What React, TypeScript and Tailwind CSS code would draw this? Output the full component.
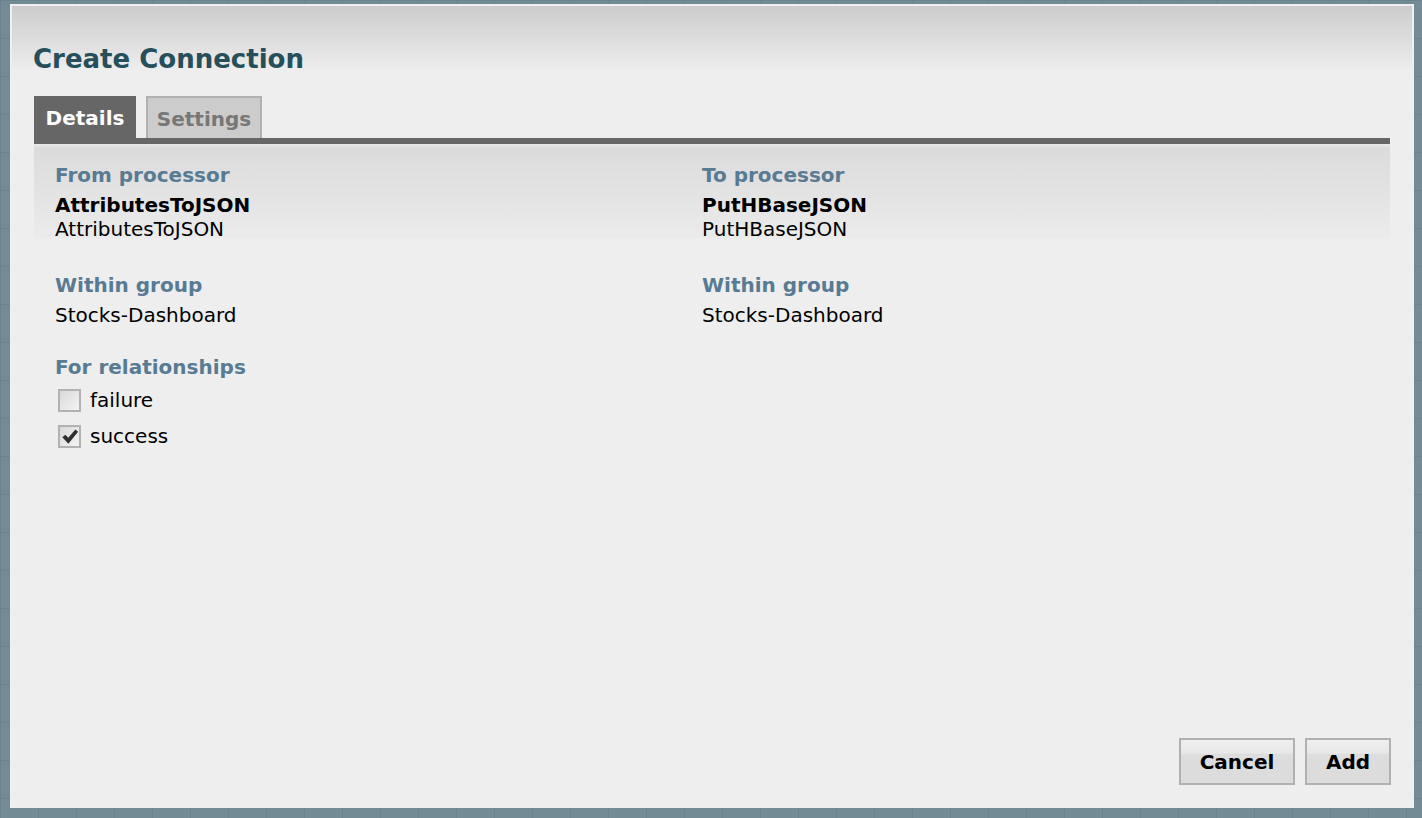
type Side = {
  label: string;
  name: string;
  type: string;
  group: string;
};

const FROM: Side = {
  label: "From processor",
  name: "AttributesToJSON",
  type: "AttributesToJSON",
  group: "Stocks-Dashboard",
};

const TO: Side = {
  label: "To processor",
  name: "PutHBaseJSON",
  type: "PutHBaseJSON",
  group: "Stocks-Dashboard",
};

const RELATIONSHIPS = [
  { name: "failure", checked: false },
  { name: "success", checked: true },
];

function Label({ children }: { children: React.ReactNode }) {
  return (
    <div className="text-[20px] font-bold leading-[24px] text-[#587b93]">
      {children}
    </div>
  );
}

function ProcessorColumn({ side }: { side: Side }) {
  return (
    <div>
      <Label>{side.label}</Label>
      <div className="mt-[6px] text-[20px] font-bold leading-[25px] text-black">
        {side.name}
      </div>
      <div className="text-[20px] leading-[23px] text-black">{side.type}</div>

      <div className="mt-[32px]">
        <Label>Within group</Label>
        <div className="mt-[6px] text-[20px] leading-[24px] text-black">
          {side.group}
        </div>
      </div>
    </div>
  );
}

function Checkbox({ checked }: { checked: boolean }) {
  return (
    <div className="flex h-[23px] w-[23px] items-center justify-center border-2 border-[#b2b2b2] bg-[linear-gradient(135deg,#d9d9d9,#f4f4f4)]">
      {checked && (
        <svg viewBox="0 0 20 20" className="h-[18px] w-[18px]">
          <path
            d="M1.5 10.2 L4.8 7.4 L8 10.8 L16 1.8 L19 4.2 L8.2 17.6 Z"
            fill="#2f2f2f"
          />
        </svg>
      )}
    </div>
  );
}

export default function App() {
  return (
    <div
      className="flex h-[818px] w-full flex-col bg-[#738b94] pb-[10px] pl-[10px] pr-[8px] pt-[4px] bg-[linear-gradient(to_right,#6b838c_1px,transparent_1px),linear-gradient(to_bottom,#6b838c_1px,transparent_1px)] bg-[size:38px_38px]"
      style={{ fontFamily: '"DejaVu Sans", Verdana, sans-serif' }}
    >
      <div className="flex flex-1 flex-col border-2 border-[#efefef] bg-[linear-gradient(to_bottom,#cccccc_0px,#eeeeee_66px)] px-[22px] pb-[21px] pt-[37px]">
        {/* Header */}
        <h1 className="-ml-px text-[26px] font-bold leading-[32px] text-[#264e5b]">
          Create Connection
        </h1>

        {/* Tabs */}
        <div className="mt-[21px] flex h-[42px] items-end gap-[10px]">
          <div className="flex h-[42px] w-[102px] items-center justify-center bg-[#666666] pt-[2px] text-[20px] font-bold text-white">
            Details
          </div>
          <div className="flex h-[42px] w-[116px] items-center justify-center border-2 border-b-0 border-[#b0b0b0] bg-[#cccccc] pt-[2px] text-[20px] font-bold text-[#777777]">
            Settings
          </div>
        </div>
        <div className="h-[6px] bg-[#666666]" />

        {/* Details panel */}
        <div className="flex-1 bg-[linear-gradient(to_bottom,#e6e6e6_0px,#e6e6e6_2px,#dbdbdb_3px,#ebebeb_94px,#eeeeee_95px)] px-[21px] pt-[19px]">
          <div className="grid grid-cols-[647px_1fr]">
            <ProcessorColumn side={FROM} />
            <ProcessorColumn side={TO} />
          </div>

          <div className="mt-[28px]">
            <Label>For relationships</Label>
            <div className="mt-[10px] flex flex-col gap-[13px] pl-[3px]">
              {RELATIONSHIPS.map((rel) => (
                <div key={rel.name} className="flex items-center gap-[9px]">
                  <Checkbox checked={rel.checked} />
                  <span className="text-[20px] leading-[23px] text-black">
                    {rel.name}
                  </span>
                </div>
              ))}
            </div>
          </div>
        </div>

        {/* Footer */}
        <div className="-mr-px flex justify-end gap-[10px]">
          <button className="h-[47px] w-[116px] border-2 border-[#b0b0b0] bg-[linear-gradient(to_bottom,#efefef_0%,#e8e8e8_30%,#dddddd_34%,#dcdcdc_100%)] text-[20px] font-bold text-black">
            Cancel
          </button>
          <button className="h-[47px] w-[86px] border-2 border-[#b0b0b0] bg-[linear-gradient(to_bottom,#efefef_0%,#e8e8e8_30%,#dddddd_34%,#dcdcdc_100%)] text-[20px] font-bold text-black">
            Add
          </button>
        </div>
      </div>
    </div>
  );
}
